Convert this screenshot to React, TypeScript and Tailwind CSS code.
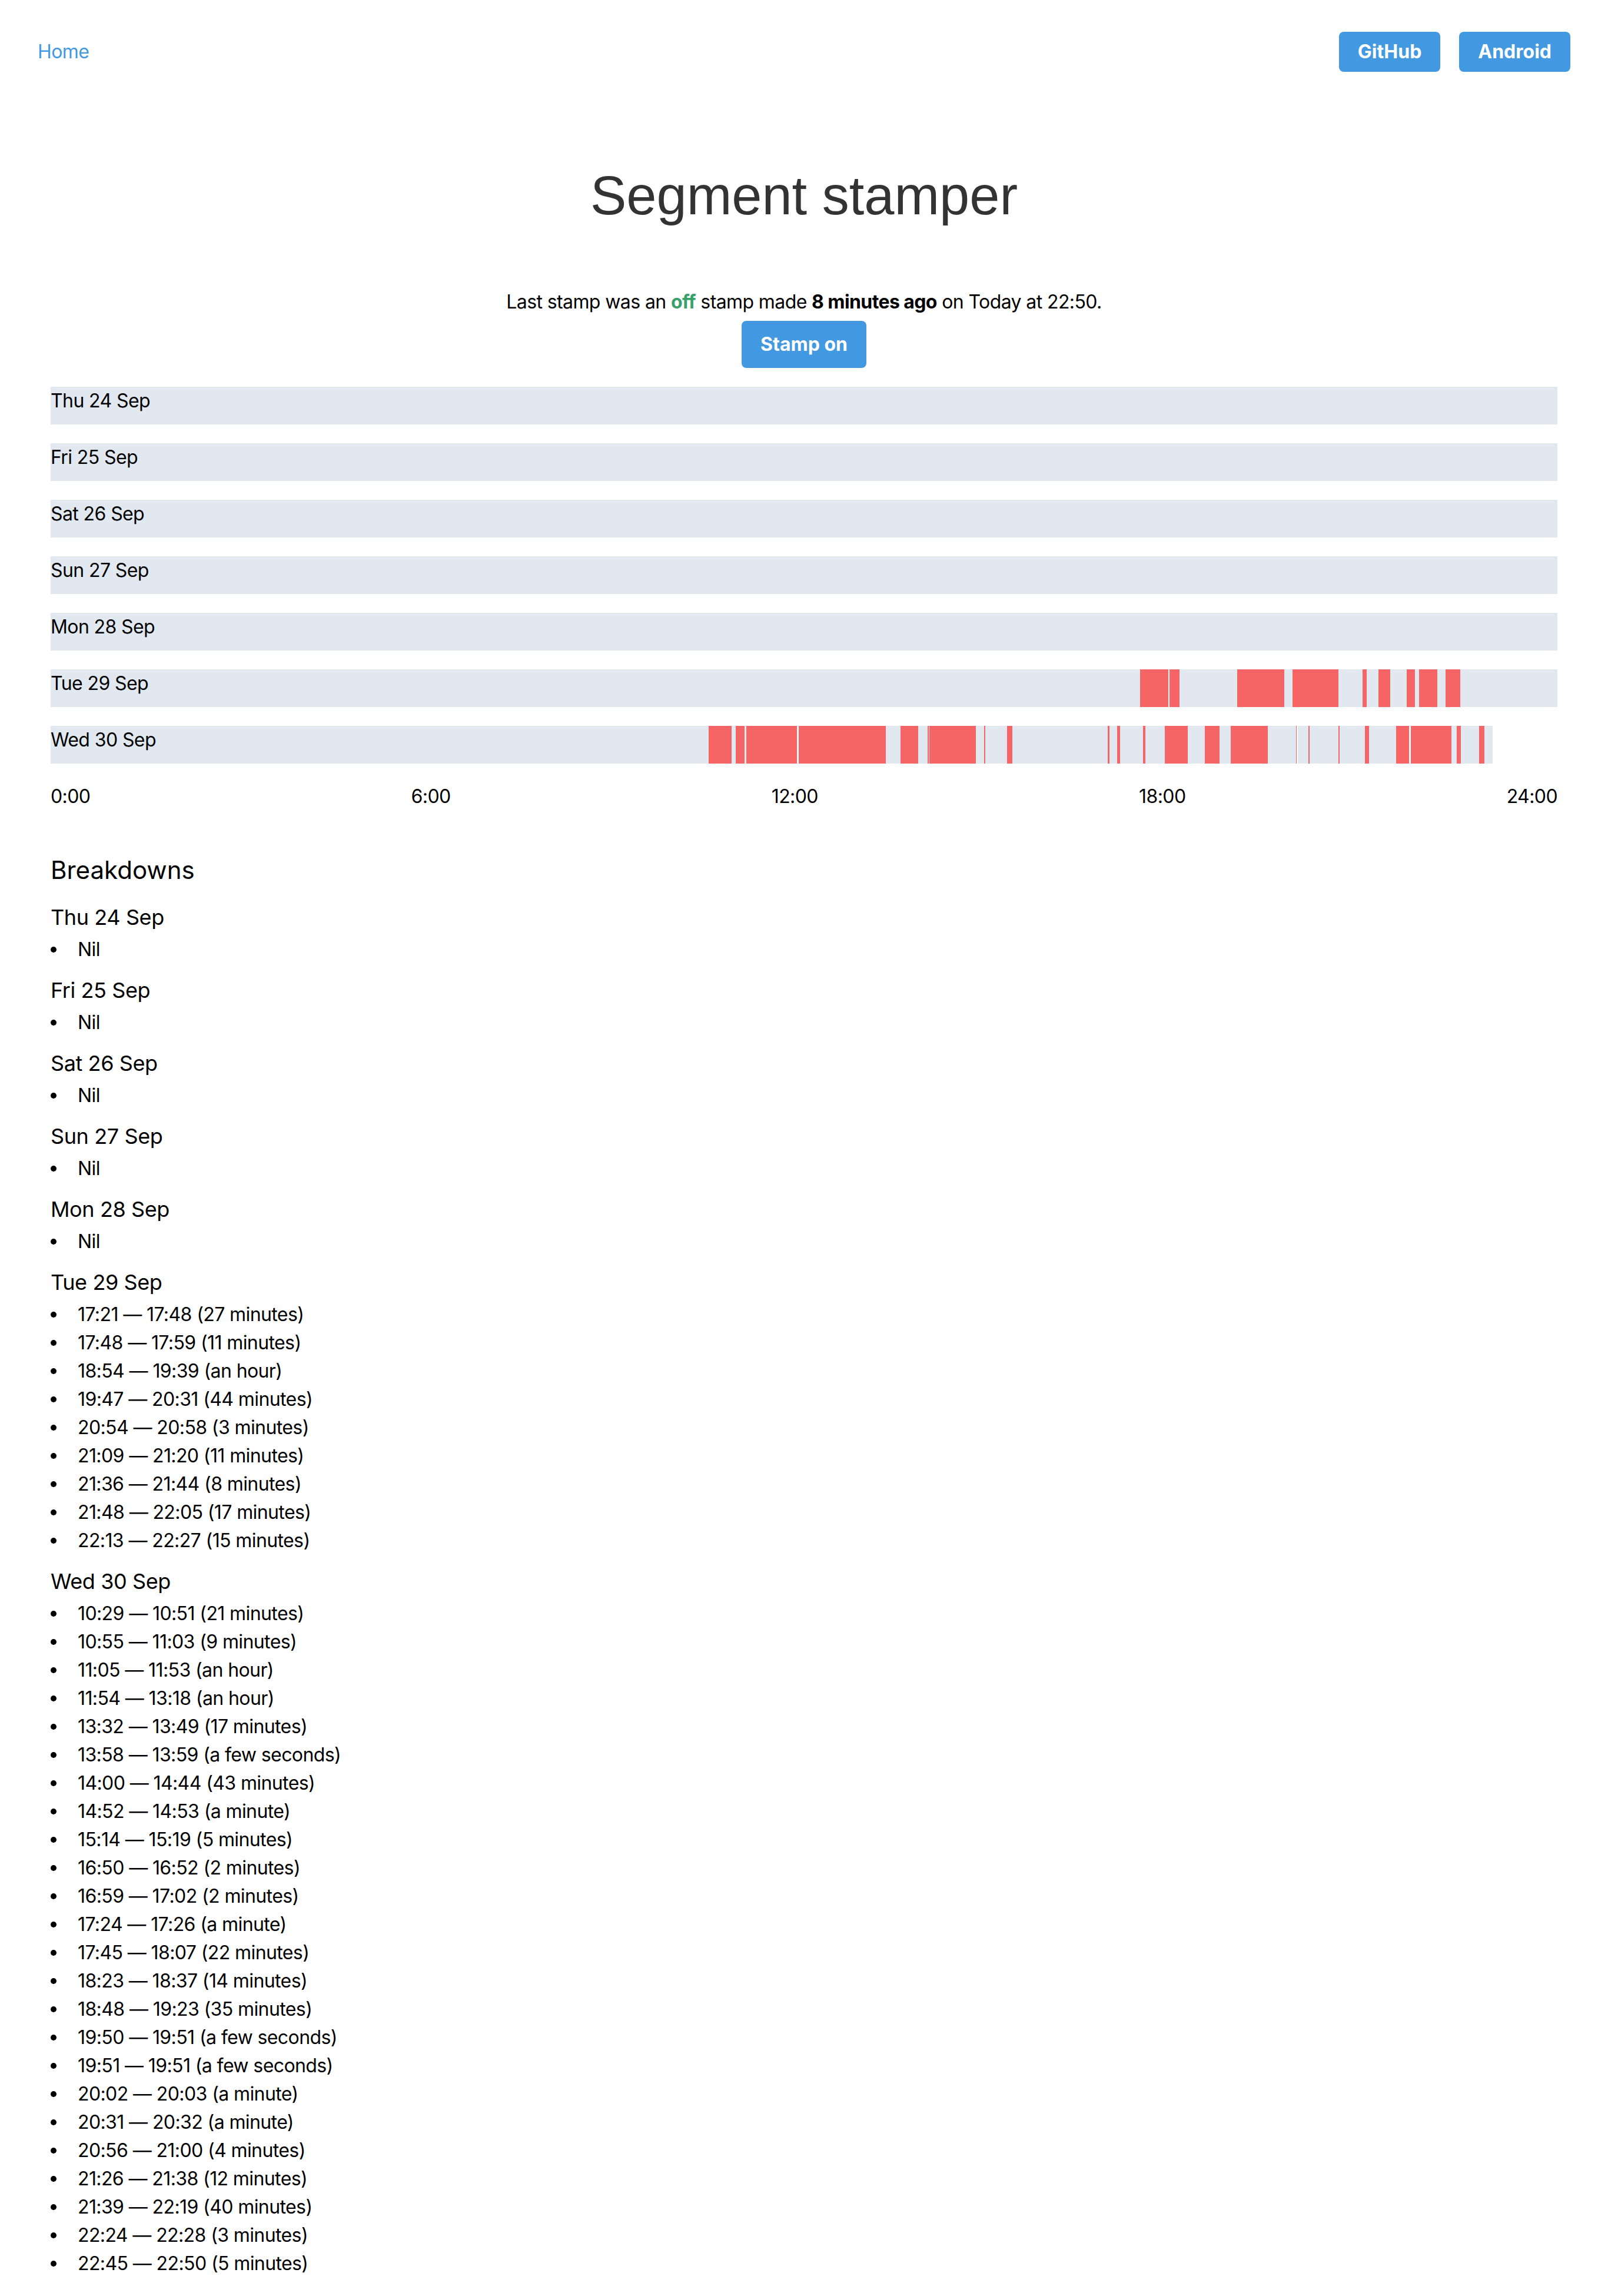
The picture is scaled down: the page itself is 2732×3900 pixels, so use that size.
import React from "react";

// [start, end, humanized duration, joined to previous segment]
type Entry = [string, string, string, boolean?];

interface Day {
  label: string;
  entries: Entry[];
  until?: string;
}

const days: Day[] = [
  { label: "Thu 24 Sep", entries: [] },
  { label: "Fri 25 Sep", entries: [] },
  { label: "Sat 26 Sep", entries: [] },
  { label: "Sun 27 Sep", entries: [] },
  { label: "Mon 28 Sep", entries: [] },
  {
    label: "Tue 29 Sep",
    entries: [
      ["17:21", "17:48", "27 minutes"],
      ["17:48", "17:59", "11 minutes", true],
      ["18:54", "19:39", "an hour"],
      ["19:47", "20:31", "44 minutes"],
      ["20:54", "20:58", "3 minutes"],
      ["21:09", "21:20", "11 minutes"],
      ["21:36", "21:44", "8 minutes"],
      ["21:48", "22:05", "17 minutes"],
      ["22:13", "22:27", "15 minutes"],
    ],
  },
  {
    label: "Wed 30 Sep",
    until: "22:58",
    entries: [
      ["10:29", "10:51", "21 minutes"],
      ["10:55", "11:03", "9 minutes"],
      ["11:05", "11:53", "an hour"],
      ["11:54", "13:18", "an hour", true],
      ["13:32", "13:49", "17 minutes"],
      ["13:58", "13:59", "a few seconds"],
      ["14:00", "14:44", "43 minutes"],
      ["14:52", "14:53", "a minute"],
      ["15:14", "15:19", "5 minutes"],
      ["16:50", "16:52", "2 minutes"],
      ["16:59", "17:02", "2 minutes"],
      ["17:24", "17:26", "a minute"],
      ["17:45", "18:07", "22 minutes"],
      ["18:23", "18:37", "14 minutes"],
      ["18:48", "19:23", "35 minutes"],
      ["19:50", "19:51", "a few seconds"],
      ["19:51", "19:51", "a few seconds", true],
      ["20:02", "20:03", "a minute"],
      ["20:31", "20:32", "a minute"],
      ["20:56", "21:00", "4 minutes"],
      ["21:26", "21:38", "12 minutes"],
      ["21:39", "22:19", "40 minutes", true],
      ["22:24", "22:28", "3 minutes"],
      ["22:45", "22:50", "5 minutes"],
    ],
  },
];

const DAY = 1440;
const toMin = (t: string) => {
  const [h, m] = t.split(":").map(Number);
  return h * 60 + m;
};
const pct = (m: number) => `${(m / DAY) * 100}%`;

const DayBar: React.FC<{ day: Day }> = ({ day }) => (
  <div className="relative h-[64px]">
    <div
      className="absolute inset-y-0 left-0 bg-[#e2e8f0]"
      style={{ width: day.until ? pct(toMin(day.until)) : "100%" }}
    />
    {day.entries.map(([start, end, , joined]) => {
      const s = toMin(start);
      const e = toMin(end);
      return (
        <div
          key={start + end}
          className={
            "absolute inset-y-0 bg-[#f56565] min-w-[2px] " +
            (joined ? "border-l-2 border-white" : "")
          }
          style={{ left: pct(s), width: pct(Math.max(e - s, 1)) }}
        />
      );
    })}
    <span className="relative">{day.label}</span>
  </div>
);

export default function App() {
  return (
    <div className="min-h-screen bg-white pb-[40px] font-['Inter',sans-serif] text-[32px] leading-[48px] tracking-[-0.6px] text-black">
      {/* Top nav */}
      <nav className="flex items-center justify-between px-[64px] py-[54px]">
        <a href="#" className="text-[32px] text-[#4299e1]">
          Home
        </a>
        <div className="flex gap-[32px]">
          <a
            href="#"
            className="rounded-[8px] bg-[#4299e1] px-[32px] py-[10px] font-bold leading-[48px] tracking-normal text-white"
          >
            GitHub
          </a>
          <a
            href="#"
            className="rounded-[8px] bg-[#4299e1] px-[32px] py-[10px] font-bold leading-[48px] tracking-normal text-white"
          >
            Android
          </a>
        </div>
      </nav>

      <div className="mx-auto w-[2560px]">
        <h1 className="mt-[101px] text-center font-['Liberation_Sans',sans-serif] text-[92px] leading-[110px] tracking-normal text-[#333333]">
          Segment stamper
        </h1>

        <p className="mt-[102px] text-center">
          Last stamp was an <span className="font-bold text-[#38a169]">off</span> stamp made{" "}
          <span className="font-bold">8 minutes ago</span> on Today at 22:50.
        </p>
        <div className="mt-[8px] flex justify-center">
          <button className="rounded-[8px] bg-[#4299e1] px-[32px] py-[16px] font-bold leading-[48px] tracking-normal text-white">
            Stamp on
          </button>
        </div>

        {/* Timeline */}
        <div className="mt-[32px] flex flex-col gap-[32px]">
          {days.map((d) => (
            <DayBar key={d.label} day={d} />
          ))}
          <div className="flex justify-between">
            <span>0:00</span>
            <span>6:00</span>
            <span>12:00</span>
            <span>18:00</span>
            <span>24:00</span>
          </div>
        </div>

        {/* Breakdowns */}
        <h2 className="mt-[71px] pb-[5px] text-[42px] leading-[60px] tracking-normal">Breakdowns</h2>
        {days.map((d) => (
          <div key={d.label} className="mt-[18px]">
            <h3 className="mb-[4px] text-[36px] leading-[54px] tracking-[-0.4px]">{d.label}</h3>
            <ul>
              {d.entries.length === 0 ? (
                <li className="flex items-center">
                  <span className="mr-[36px] h-[10px] w-[10px] rounded-full bg-black" />
                  Nil
                </li>
              ) : (
                d.entries.map(([start, end, dur]) => (
                  <li key={start + end + dur} className="flex items-center">
                    <span className="mr-[36px] h-[10px] w-[10px] rounded-full bg-black" />
                    {start} — {end} ({dur})
                  </li>
                ))
              )}
            </ul>
          </div>
        ))}
      </div>
    </div>
  );
}
